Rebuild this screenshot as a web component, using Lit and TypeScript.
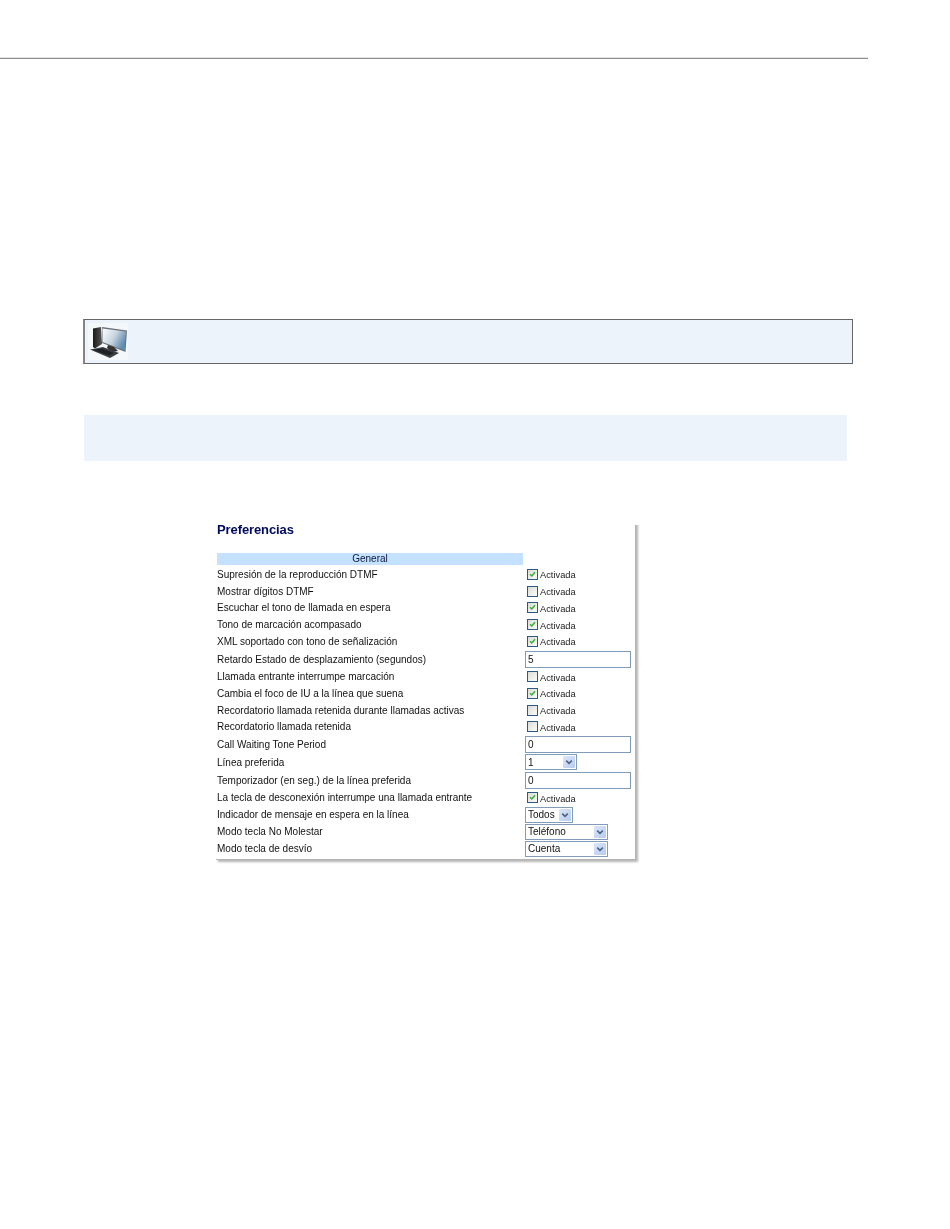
import { LitElement, html, css } from "lit";
import { customElement } from "lit/decorators.js";

type Row =
  | { label: string; kind: "check"; on: boolean }
  | { label: string; kind: "input"; value: string }
  | { label: string; kind: "select"; value: string; width: string };

const ROWS: Row[] = [
  { label: "Supresión de la reproducción DTMF", kind: "check", on: true },
  { label: "Mostrar dígitos DTMF", kind: "check", on: false },
  { label: "Escuchar el tono de llamada en espera", kind: "check", on: true },
  { label: "Tono de marcación acompasado", kind: "check", on: true },
  { label: "XML soportado con tono de señalización", kind: "check", on: true },
  { label: "Retardo Estado de desplazamiento (segundos)", kind: "input", value: "5" },
  { label: "Llamada entrante interrumpe marcación", kind: "check", on: false },
  { label: "Cambia el foco de IU a la línea que suena", kind: "check", on: true },
  { label: "Recordatorio llamada retenida durante llamadas activas", kind: "check", on: false },
  { label: "Recordatorio llamada retenida", kind: "check", on: false },
  { label: "Call Waiting Tone Period", kind: "input", value: "0" },
  { label: "Línea preferida", kind: "select", value: "1", width: "w52" },
  { label: "Temporizador (en seg.) de la línea preferida", kind: "input", value: "0" },
  { label: "La tecla de desconexión interrumpe una llamada entrante", kind: "check", on: true },
  { label: "Indicador de mensaje en espera en la línea", kind: "select", value: "Todos", width: "w48" },
  { label: "Modo tecla No Molestar", kind: "select", value: "Teléfono", width: "w83" },
  { label: "Modo tecla de desvío", kind: "select", value: "Cuenta", width: "w83" },
];

@customElement("app-root")
export class AppRoot extends LitElement {
  static styles = css`
    :host {
      display: block;
      width: 950px;
      height: 1229px;
      background: #fff;
      font-family: "Liberation Sans", Arial, sans-serif;
      overflow: hidden;
    }
    .rule {
      width: 868px;
      height: 1px;
      margin-top: 58px;
      background: #8f8f8f;
      box-shadow: 0 -1px 0 #e4e4e4;
    }
    .note {
      box-sizing: border-box;
      width: 770px;
      height: 45px;
      margin: 260px 0 0 83px;
      padding: 3px 0 0 3px;
      background: #edf3fa;
      border: 1px solid #666;
      border-left: 2px solid #858585;
    }
    .note svg {
      display: block;
      filter: blur(0.6px);
    }
    .band {
      width: 763px;
      height: 46px;
      margin: 51px 0 0 84px;
      background: #edf3fa;
    }
    .shot {
      box-sizing: border-box;
      width: 420px;
      height: 339px;
      margin: 60px 0 0 216px;
      padding: 0 0 0 1px;
      border-right: 1px solid #b4b4b4;
      border-bottom: 1px solid #b4b4b4;
      box-shadow: 1.5px 1.5px 2px rgba(110, 110, 110, 0.5);
      clip-path: inset(4px -5px -5px 0);
      filter: blur(0.25px);
    }
    h1 {
      margin: 0;
      padding-top: 1px;
      height: 25px;
      box-sizing: border-box;
      font-size: 13px;
      line-height: 15px;
      font-weight: bold;
      color: #000a5c;
      letter-spacing: -0.1px;
    }
    .head {
      width: 306px;
      height: 12px;
      margin-top: 7px;
      background: #c4e2ff;
      color: #0c1640;
      font-size: 10px;
      line-height: 12px;
      text-align: center;
    }
    .rows {
      display: grid;
      grid-template-columns: 308px 106px;
      margin-top: 1px;
    }
    .label {
      font-size: 10px;
      color: #111;
      display: flex;
      align-items: center;
      white-space: nowrap;
    }
    .cell {
      display: flex;
      align-items: center;
    }
    .r-check {
      height: 16.75px;
    }
    .r-input {
      height: 18.5px;
    }
    .r-select {
      height: 17px;
    }
    .tick {
      display: flex;
      align-items: center;
      gap: 2px;
      margin-left: 2px;
      font-size: 9.3px;
      color: #1c1c1c;
    }
    .tick span:last-child {
      padding-top: 2px;
    }
    .box {
      box-sizing: border-box;
      width: 11px;
      height: 11px;
      border: 1px solid #2c5a85;
      background: linear-gradient(135deg, #dcdcd6, #fbfbf9);
      display: block;
    }
    .box svg {
      display: block;
    }
    .field {
      box-sizing: border-box;
      width: 106px;
      height: 17px;
      border: 1px solid #7f9db9;
      padding-left: 2px;
      font-size: 10px;
      line-height: 15px;
      color: #111;
      background: #fff;
    }
    .select {
      box-sizing: border-box;
      height: 16px;
      border: 1px solid #7f9db9;
      padding: 0 1px 0 2px;
      display: flex;
      align-items: center;
      justify-content: space-between;
      font-size: 10px;
      color: #111;
      background: #fff;
    }
    .w52 {
      width: 52px;
    }
    .w48 {
      width: 48px;
    }
    .w83 {
      width: 83px;
    }
    .btn {
      width: 12px;
      height: 12px;
      background: linear-gradient(135deg, #dbe6fa, #b6cbee);
      border-radius: 1px;
      display: block;
    }
    .btn svg {
      display: block;
    }
  `;

  private icon() {
    return html`<svg width="40" height="37" viewBox="0 0 40 37">
      <defs>
        <linearGradient id="scr" x1="0" y1="0" x2="1" y2="0.5">
          <stop offset="0" stop-color="#ffffff" />
          <stop offset="0.55" stop-color="#c8d4de" />
          <stop offset="1" stop-color="#5f8bb0" />
        </linearGradient>
        <linearGradient id="tw" x1="0" y1="0" x2="1" y2="0">
          <stop offset="0" stop-color="#1a1a1a" />
          <stop offset="1" stop-color="#555" />
        </linearGradient>
      </defs>
      <rect width="40" height="37" fill="#f5f8fb" />
      <path d="M5 5.5 L13 4 L14 21 L7 25.5 L5 24 Z" fill="url(#tw)" />
      <path d="M14 4 L39 7.5 L37.5 29 L14 20 Z" fill="#6a7078" />
      <path d="M14.5 5.5 L38 8.5 L36.8 27.5 L14.5 19 Z" fill="url(#scr)" />
      <path d="M20 22 L26 24 L30 28 L24 29 L19 25 Z" fill="#333" />
      <path d="M2 26.5 L15 24 L31 30 L22 35 Z" fill="#3a3e44" />
      <path d="M5 27 L14 25.5 L26 30 L21 32.5 Z" fill="#1e2126" />
    </svg>`;
  }

  private control(r: Row) {
    if (r.kind === "check") {
      return html`<div class="tick">
        <span class="box">
          ${r.on
            ? html`<svg width="9" height="9" viewBox="0 0 9 9">
                <path d="M2 4.2 L3.8 6 L7 2.2" fill="none" stroke="#35b035" stroke-width="1.5" />
              </svg>`
            : ""}
        </span>
        <span>Activada</span>
      </div>`;
    }
    if (r.kind === "input") {
      return html`<div class="field">${r.value}</div>`;
    }
    return html`<div class="select ${r.width}">
      <span>${r.value}</span>
      <span class="btn">
        <svg width="12" height="12" viewBox="0 0 12 12">
          <path d="M3.2 4.6 L6 7.4 L8.8 4.6" fill="none" stroke="#4d6185" stroke-width="1.5" />
        </svg>
      </span>
    </div>`;
  }

  render() {
    return html`
      <div class="rule"></div>
      <div class="note">${this.icon()}</div>
      <div class="band"></div>
      <div class="shot">
        <h1>Preferencias</h1>
        <div class="head">General</div>
        <div class="rows">
          ${ROWS.map(
            (r) => html`
              <div class="label r-${r.kind}">${r.label}</div>
              <div class="cell r-${r.kind}">${this.control(r)}</div>
            `
          )}
        </div>
      </div>
    `;
  }
}
